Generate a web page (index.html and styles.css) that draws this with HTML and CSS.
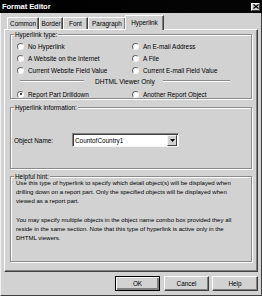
FILE: index.html
```html
<!DOCTYPE html>
<html>
<head>
<meta charset="utf-8">
<link rel="stylesheet" href="styles.css">
</head>
<body>
<div class="dialog">
  <div class="titlebar">
    <span class="title">Format Editor</span>
    <span class="close"><svg width="6" height="5" viewBox="0 0 6 5"><path d="M0.5 0.5L5.5 4.5M5.5 0.5L0.5 4.5" stroke="#000" stroke-width="1.2"/></svg></span>
  </div>
  <div class="frame">
    <div class="tabs">
      <div class="tab w-common">Common</div>
      <div class="tab w-border">Border</div>
      <div class="tab w-font">Font</div>
      <div class="tab w-para">Paragraph</div>
      <div class="tab active w-link">Hyperlink</div>
    </div>
    <div class="panel">
      <div class="group g1">
        <span class="legend">Hyperlink type:</span>
        <div class="radios">
          <div class="opt"><span class="radio"></span>No Hyperlink</div>
          <div class="opt"><span class="radio"></span>An E-mail Address</div>
          <div class="opt"><span class="radio"></span>A Website on the Internet</div>
          <div class="opt"><span class="radio"></span>A File</div>
          <div class="opt"><span class="radio"></span>Current Website Field Value</div>
          <div class="opt"><span class="radio"></span>Current E-mail Field Value</div>
          <div class="divider">
            <span class="rule r1"></span>
            <span class="dtext">DHTML Viewer Only</span>
            <span class="rule r2"></span>
          </div>
          <div class="opt"><span class="radio checked"></span>Report Part Drilldown</div>
          <div class="opt"><span class="radio"></span>Another Report Object</div>
        </div>
      </div>
      <div class="group g2">
        <span class="legend">Hyperlink information:</span>
        <div class="objrow">
          <span class="objlabel">Object Name:</span>
          <div class="combo">
            <span class="combotext">CountofCountry1</span>
            <span class="dropbtn"><svg width="5" height="3" viewBox="0 0 5 3"><path d="M0 0H5L2.5 3Z" fill="#000"/></svg></span>
          </div>
        </div>
      </div>
      <div class="group g3">
        <span class="legend">Helpful hint:</span>
        <p class="hint">Use this type of hyperlink to specify which detail object(s) will be displayed when<br>drilling down on a report part. Only the specified objects will be displayed when<br>viewed as a report part.</p>
        <p class="hint">You may specify multiple objects in the object name combo box provided they all<br>reside in the same section. Note that this type of hyperlink is active only in the<br>DHTML viewers.</p>
      </div>
    </div>
    <div class="buttons">
      <div class="btn default b-ok">OK</div>
      <div class="btn b-cancel">Cancel</div>
      <div class="btn b-help">Help</div>
    </div>
  </div>
</div>
</body>
</html>
```
FILE: styles.css
```css
* { box-sizing: border-box; }
html, body { margin: 0; padding: 0; }
body {
  background: #d2d2d2;
  font-family: "Liberation Sans", Arial, sans-serif;
  font-size: 6.4px;
  color: #000;
}
.dialog {
  width: 262px;
  height: 296px;
  display: flex;
  flex-direction: column;
  overflow: hidden;
}
.titlebar {
  height: 13px;
  background: linear-gradient(90deg, #000 0%, #050505 100%);
  display: flex;
  align-items: center;
  justify-content: space-between;
  padding-left: 2px;
  padding-right: 2px;
}
.title {
  color: #fff;
  font-weight: bold;
  font-size: 7.6px;
  letter-spacing: -0.1px;
}
.close {
  width: 9px;
  height: 8px;
  background: #d2d2d2;
  border: 1px solid;
  border-color: #fff #404040 #404040 #fff;
  display: flex;
  align-items: center;
  justify-content: center;
}
.close svg { display: block; }
.frame {
  flex: 1;
  border-left: 1px solid #f2f2f2;
  border-right: 1px solid #404040;
  border-bottom: 1px solid #404040;
  display: flex;
  flex-direction: column;
}
.tabs {
  height: 16px;
  display: flex;
  align-items: flex-end;
  padding-left: 6px;
}
.tab {
  height: 12px;
  border-top: 1px solid #fff;
  border-left: 1px solid #fff;
  border-right: 1px solid #404040;
  box-shadow: inset -1px 0 0 #808080;
  display: flex;
  align-items: center;
  justify-content: center;
  padding-bottom: 1px;
}
.w-common { width: 32px; }
.w-border { width: 24px; }
.w-font { width: 25px; }
.w-para { width: 38px; }
.w-link { width: 39px; }
.tab.active {
  height: 15px;
  margin-left: -1px;
  margin-bottom: -1px;
  position: relative;
  z-index: 2;
  background: #d2d2d2;
  padding-bottom: 2px;
}
.panel {
  height: 243px;
  margin: 0 3px;
  border-top: 1px solid #fff;
  border-left: 1px solid #fff;
  border-right: 1px solid #404040;
  border-bottom: 1px solid #404040;
  box-shadow: inset -1px -1px 0 #808080;
  padding: 4px 5px 0 5px;
  display: flex;
  flex-direction: column;
}
.group {
  position: relative;
  border: 1px solid #8a8a8a;
  box-shadow: inset 1px 1px 0 #fff, 1px 1px 0 #fff;
}
.legend {
  position: absolute;
  top: -4px;
  left: 3px;
  background: #d2d2d2;
  padding: 0 1px;
  line-height: 7px;
  white-space: nowrap;
}
.g1 { height: 65px; padding: 5px 0 0 6px; }
.g2 { height: 62px; margin-top: 8px; }
.g3 { height: 86px; margin-top: 7px; padding: 2px 0 0 5px; }
.radios {
  display: grid;
  grid-template-columns: 115px 1fr;
  grid-auto-rows: 12px;
}
.opt {
  display: flex;
  align-items: center;
  white-space: nowrap;
}
.radio {
  width: 7px;
  height: 7px;
  border-radius: 50%;
  background: #fff;
  border: 1px solid;
  border-color: #6a6a6a #f4f4f4 #f4f4f4 #6a6a6a;
  margin-right: 4px;
  flex: none;
  position: relative;
}
.radio.checked::after {
  content: "";
  position: absolute;
  left: 1.5px;
  top: 1.5px;
  width: 2px;
  height: 2px;
  border-radius: 50%;
  background: #000;
}
.divider {
  grid-column: 1 / 3;
  height: 10px;
  display: flex;
  align-items: center;
}
.rule {
  height: 2px;
  border-top: 1px solid #8a8a8a;
  border-bottom: 1px solid #fff;
}
.r1 { width: 64px; margin-left: 3px; }
.dtext { width: 79px; padding-left: 11px; white-space: nowrap; font-size: 6.6px; }
.r2 { width: 67px; }
.objrow {
  display: flex;
  align-items: center;
  padding: 25px 0 0 3px;
}
.objlabel { width: 58px; }
.combo {
  width: 107px;
  height: 14px;
  background: #fff;
  border: 1px solid;
  border-color: #808080 #f4f4f4 #f4f4f4 #808080;
  box-shadow: inset 1px 1px 0 #404040;
  display: flex;
  align-items: center;
  justify-content: space-between;
  padding: 0 1px 0 2px;
}
.dropbtn {
  width: 10px;
  height: 11px;
  background: #d2d2d2;
  border: 1px solid;
  border-color: #f4f4f4 #404040 #404040 #f4f4f4;
  display: flex;
  align-items: center;
  justify-content: center;
}
.dropbtn svg { display: block; }
.hint {
  margin: 0;
  line-height: 9.2px;
  white-space: nowrap;
  font-size: 6.05px;
}
.hint + .hint { margin-top: 9.2px; }
.buttons {
  display: flex;
  justify-content: flex-end;
  margin-top: 4px;
  padding-right: 3px;
}
.btn {
  height: 15px;
  display: flex;
  align-items: center;
  justify-content: center;
  border: 1px solid;
  border-color: #fff #404040 #404040 #fff;
  box-shadow: inset -1px -1px 0 #808080;
}
.btn.default {
  border-color: #000;
  box-shadow: inset 1px 1px 0 #fff, inset -2px -2px 0 #808080;
}
.b-ok { width: 45px; }
.b-cancel { width: 45px; margin-left: 4px; }
.b-help { width: 46px; margin-left: 3px; }
```
